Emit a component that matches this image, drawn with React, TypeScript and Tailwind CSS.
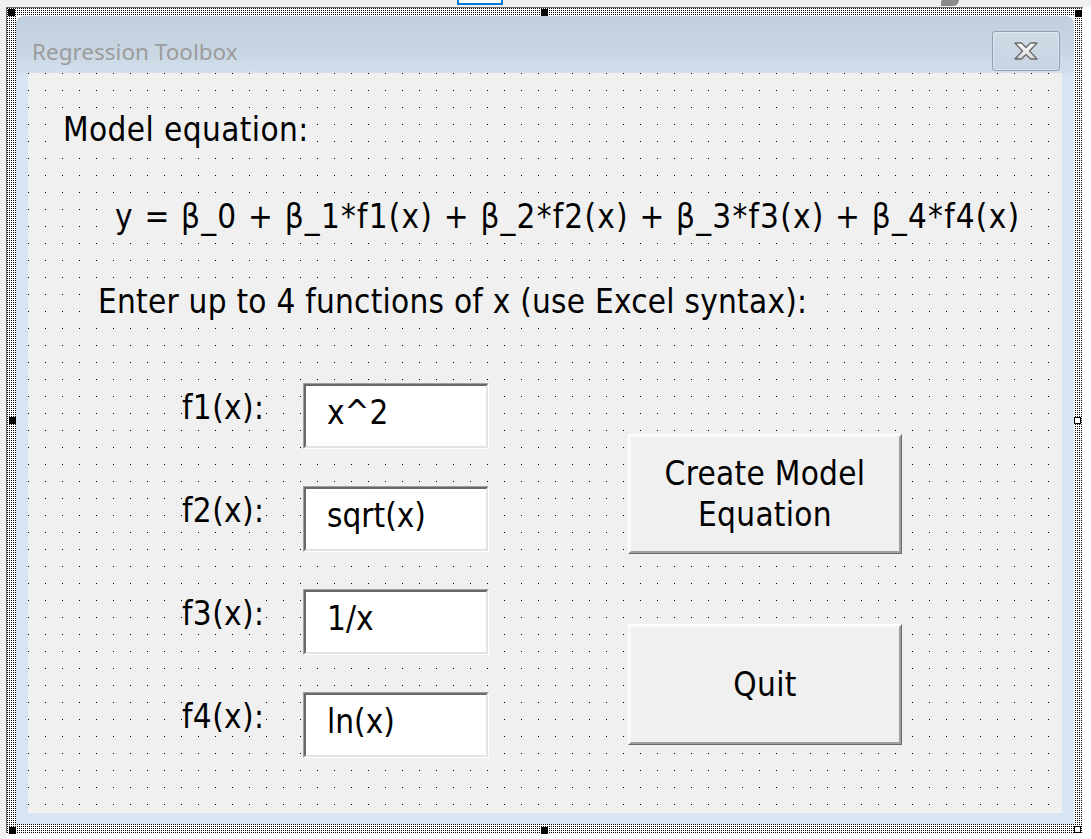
import React from "react";

const hatch =
  "bg-black bg-[linear-gradient(90deg,transparent_1px,#fff_1px),linear-gradient(transparent_1px,#fff_1px)] bg-[length:2px_2px]";

function Handle({ pos, filled }: { pos: string; filled: boolean }) {
  return (
    <div
      className={`absolute w-[7px] h-[7px] border border-black ${filled ? "bg-black" : "bg-white"} ${pos}`}
    />
  );
}

function TextBox({ value }: { value: string }) {
  return (
    <div className="w-[186px] h-[66px] border border-t-[#a0a0a0] border-l-[#a0a0a0] border-r-white border-b-white">
      <div className="w-full h-full bg-white border-[2px] border-t-[#696969] border-l-[#696969] border-r-[#e3e3e3] border-b-[#e3e3e3] flex items-center pl-[21px] pb-[6px]">
        {value}
      </div>
    </div>
  );
}

function Btn({ children, h }: { children: React.ReactNode; h: string }) {
  return (
    <button
      className={`w-[274px] ${h} border border-t-white border-l-white border-r-[#696969] border-b-[#696969] bg-[#f0f0f0]`}
    >
      <div className="w-full h-full border-[2px] border-t-[#f8f8f8] border-l-[#f8f8f8] border-r-[#a0a0a0] border-b-[#a0a0a0] flex items-center justify-center text-center leading-[41px] tracking-[0.3px]">
        {children}
      </div>
    </button>
  );
}

export default function App() {
  const funcs = [
    { label: "f1(x):", value: "x^2" },
    { label: "f2(x):", value: "sqrt(x)" },
    { label: "f3(x):", value: "1/x" },
    { label: "f4(x):", value: "ln(x)" },
  ];

  return (
    <div className="w-[1091px] h-[839px] bg-white relative overflow-hidden font-['DejaVu_Sans_Condensed','DejaVu_Sans',sans-serif] text-black">
      {/* designer strip on top */}
      <div className="h-[7px] bg-[#f0f0f0] relative">
        <div className="absolute left-[457px] -top-[2px] w-[46px] h-[7px] border-[2px] border-[#0078d7] bg-white" />
        <div className="absolute left-[941px] top-0 w-[18px] h-[6px] bg-[#8a8a8a] rounded-br-[6px] rounded-tl-[2px]" />
      </div>

      <div className="flex">
        <div className="w-[6px] h-[832px] bg-[#f0f0f0]" />

        {/* selection frame */}
        <div className={`relative w-[1077px] h-[826px] border-l border-t border-[#6a6a6a] pl-[9px] pt-[8px] pr-[9px] pb-[9px] ${hatch}`}>
          <Handle pos="left-[1px] top-[1px]" filled />
          <Handle pos="left-[534px] top-[1px]" filled />
          <Handle pos="left-[1068px] top-[2px]" filled />
          <Handle pos="left-[2px] top-[409px]" filled />
          <Handle pos="left-[1067px] top-[409px]" filled={false} />
          <Handle pos="left-[2px] top-[819px]" filled />
          <Handle pos="left-[534px] top-[819px]" filled />
          <Handle pos="left-[1067px] top-[818px]" filled={false} />

          {/* window */}
          <div className="w-[1058px] h-[808px] bg-white">
            <div className="w-full h-full rounded-t-[8px] bg-[#d7e4f2] flex flex-col overflow-hidden">
              {/* title bar */}
              <div className="h-[57px] shrink-0 bg-[linear-gradient(#c1cfdc,#c8d5e2_60%,#d3dfec)] flex items-start justify-between pl-[16px] pr-[14px]">
                <div className="mt-[22px] text-[22.5px] leading-[28px] text-[#9c9c9c] font-['Noto_Sans','Open_Sans',sans-serif]">
                  Regression Toolbox
                </div>
                <div className="mt-[15px] w-[68px] h-[40px] rounded-[3px] border border-[#8e9fb3] bg-[linear-gradient(#cfdbe7,#c6d3e0)] flex items-center justify-center shadow-[inset_0_0_0_1px_rgba(255,255,255,0.35)]">
                  <svg width="26" height="20" viewBox="0 0 26 20">
                    <defs>
                      <linearGradient id="xg" x1="0" y1="0" x2="0" y2="1">
                        <stop offset="0" stopColor="#ffffff" />
                        <stop offset="1" stopColor="#d8d8d8" />
                      </linearGradient>
                    </defs>
                    <path
                      d="M2 2 H8.5 L13 6.5 L17.5 2 H24 L16.5 10 L24 18 H17.5 L13 13.5 L8.5 18 H2 L9.5 10 Z"
                      fill="url(#xg)"
                      stroke="#6a6a6a"
                      strokeWidth="1.3"
                      strokeLinejoin="round"
                    />
                  </svg>
                </div>
              </div>

              {/* client */}
              <div className="flex-1 px-[12px] pb-[11px] flex">
                <div className="w-[1034px] h-[740px] bg-black bg-[linear-gradient(90deg,#f0f0f0_16px,transparent_16px),linear-gradient(#f0f0f0_16px,transparent_16px)] bg-[length:17px_17px] bg-[position:1px_1px] flex flex-col items-start text-[33px] leading-[40px]">
                  <div className="mt-[37px] ml-[30px] px-[5px] bg-[#f0f0f0] tracking-[0.4px]">Model equation:</div>
                  <div className="mt-[47px] ml-[82px] px-[5px] bg-[#f0f0f0] tracking-[1.2px]">
                    y = β_0 + β_1*f1(x) + β_2*f2(x) + β_3*f3(x) + β_4*f4(x)
                  </div>
                  <div className="mt-[45px] ml-[65px] px-[5px] bg-[#f0f0f0] tracking-[0.25px]">
                    Enter up to 4 functions of x (use Excel syntax):
                  </div>

                  <div className="mt-[61px] ml-[154px] flex">
                    <div className="flex flex-col gap-[37px]">
                      {funcs.map((f) => (
                        <div key={f.label} className="flex items-center">
                          <div className="w-[121px] mb-[16px]">
                            <span className="bg-[#f0f0f0] tracking-[0.4px]">{f.label}</span>
                          </div>
                          <TextBox value={f.value} />
                        </div>
                      ))}
                    </div>
                    <div className="ml-[139px] mt-[51px] flex flex-col gap-[70px]">
                      <Btn h="h-[120px]">
                        Create Model
                        <br />
                        Equation
                      </Btn>
                      <Btn h="h-[121px]">Quit</Btn>
                    </div>
                  </div>
                </div>
              </div>
            </div>
          </div>
        </div>
      </div>
    </div>
  );
}
